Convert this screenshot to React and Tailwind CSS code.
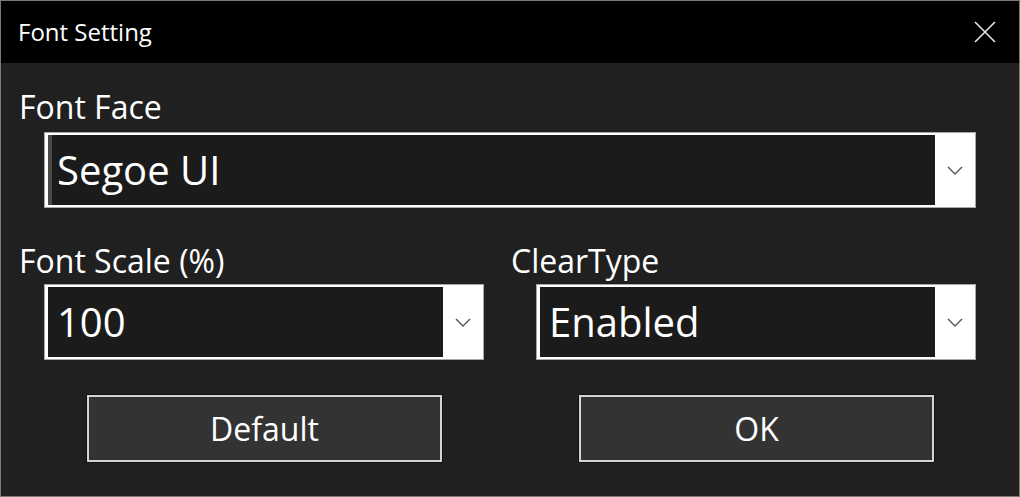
import React from "react";

function Chevron() {
  return (
    <svg width="16" height="9" viewBox="0 0 16 9" fill="none">
      <path d="M1 1 L8 8 L15 1" stroke="#555" strokeWidth="1.4" />
    </svg>
  );
}

function Combo({ value, caret }) {
  return (
    <div className="h-[76px] bg-white border border-[#a8a8a8] pl-[3px] py-[2px] flex">
      <div className="flex-1 bg-[#1b1b1b] flex items-center">
        {caret ? <div className="w-[4px] h-full bg-[#4a4a4a]" /> : <div className="w-[4px] h-full" />}
        <span className="pl-[5px] text-[40px] text-white leading-none">{value}</span>
      </div>
      <div className="w-[40px] flex items-center justify-center">
        <Chevron />
      </div>
    </div>
  );
}

function Button({ children }) {
  return (
    <div className="h-[67px] bg-[#333333] border-2 border-[#d4d4d4] outline outline-1 outline-[#111] flex items-center justify-center text-[32px] text-white">
      {children}
    </div>
  );
}

export default function App() {
  return (
    <div
      className="w-[1020px] h-[497px] bg-[#202020] border border-[#7a7a7a] flex flex-col overflow-hidden"
      style={{ fontFamily: '"Open Sans", "Noto Sans", sans-serif' }}
    >
      <div className="h-[62px] shrink-0 bg-black flex items-center justify-between pl-[17px] pr-[23px]">
        <span className="text-[24px] text-white">Font Setting</span>
        <svg width="22" height="22" viewBox="0 0 22 22" fill="none">
          <path d="M1 1 L21 21 M21 1 L1 21" stroke="#e6e6e6" strokeWidth="1.6" />
        </svg>
      </div>
      <div className="flex flex-col pl-[18px] pr-[43px] pt-[26px]">
        <div className="text-[32px] leading-[36px] text-white mb-[7px]">Font Face</div>
        <div className="ml-[25px]">
          <Combo value="Segoe UI" caret />
        </div>
        <div className="grid grid-cols-2 gap-[27px] mt-[35px]">
          <div className="flex flex-col">
            <div className="text-[32px] leading-[36px] text-white mb-[5px]">Font Scale (%)</div>
            <div className="ml-[25px]">
              <Combo value="100" />
            </div>
            <div className="ml-[68px] mr-[42px] mt-[35px]">
              <Button>Default</Button>
            </div>
          </div>
          <div className="flex flex-col">
            <div className="text-[32px] leading-[36px] text-white mb-[5px]">ClearType</div>
            <div className="ml-[25px]">
              <Combo value="Enabled" />
            </div>
            <div className="ml-[68px] mr-[42px] mt-[35px]">
              <Button>OK</Button>
            </div>
          </div>
        </div>
      </div>
    </div>
  );
}
